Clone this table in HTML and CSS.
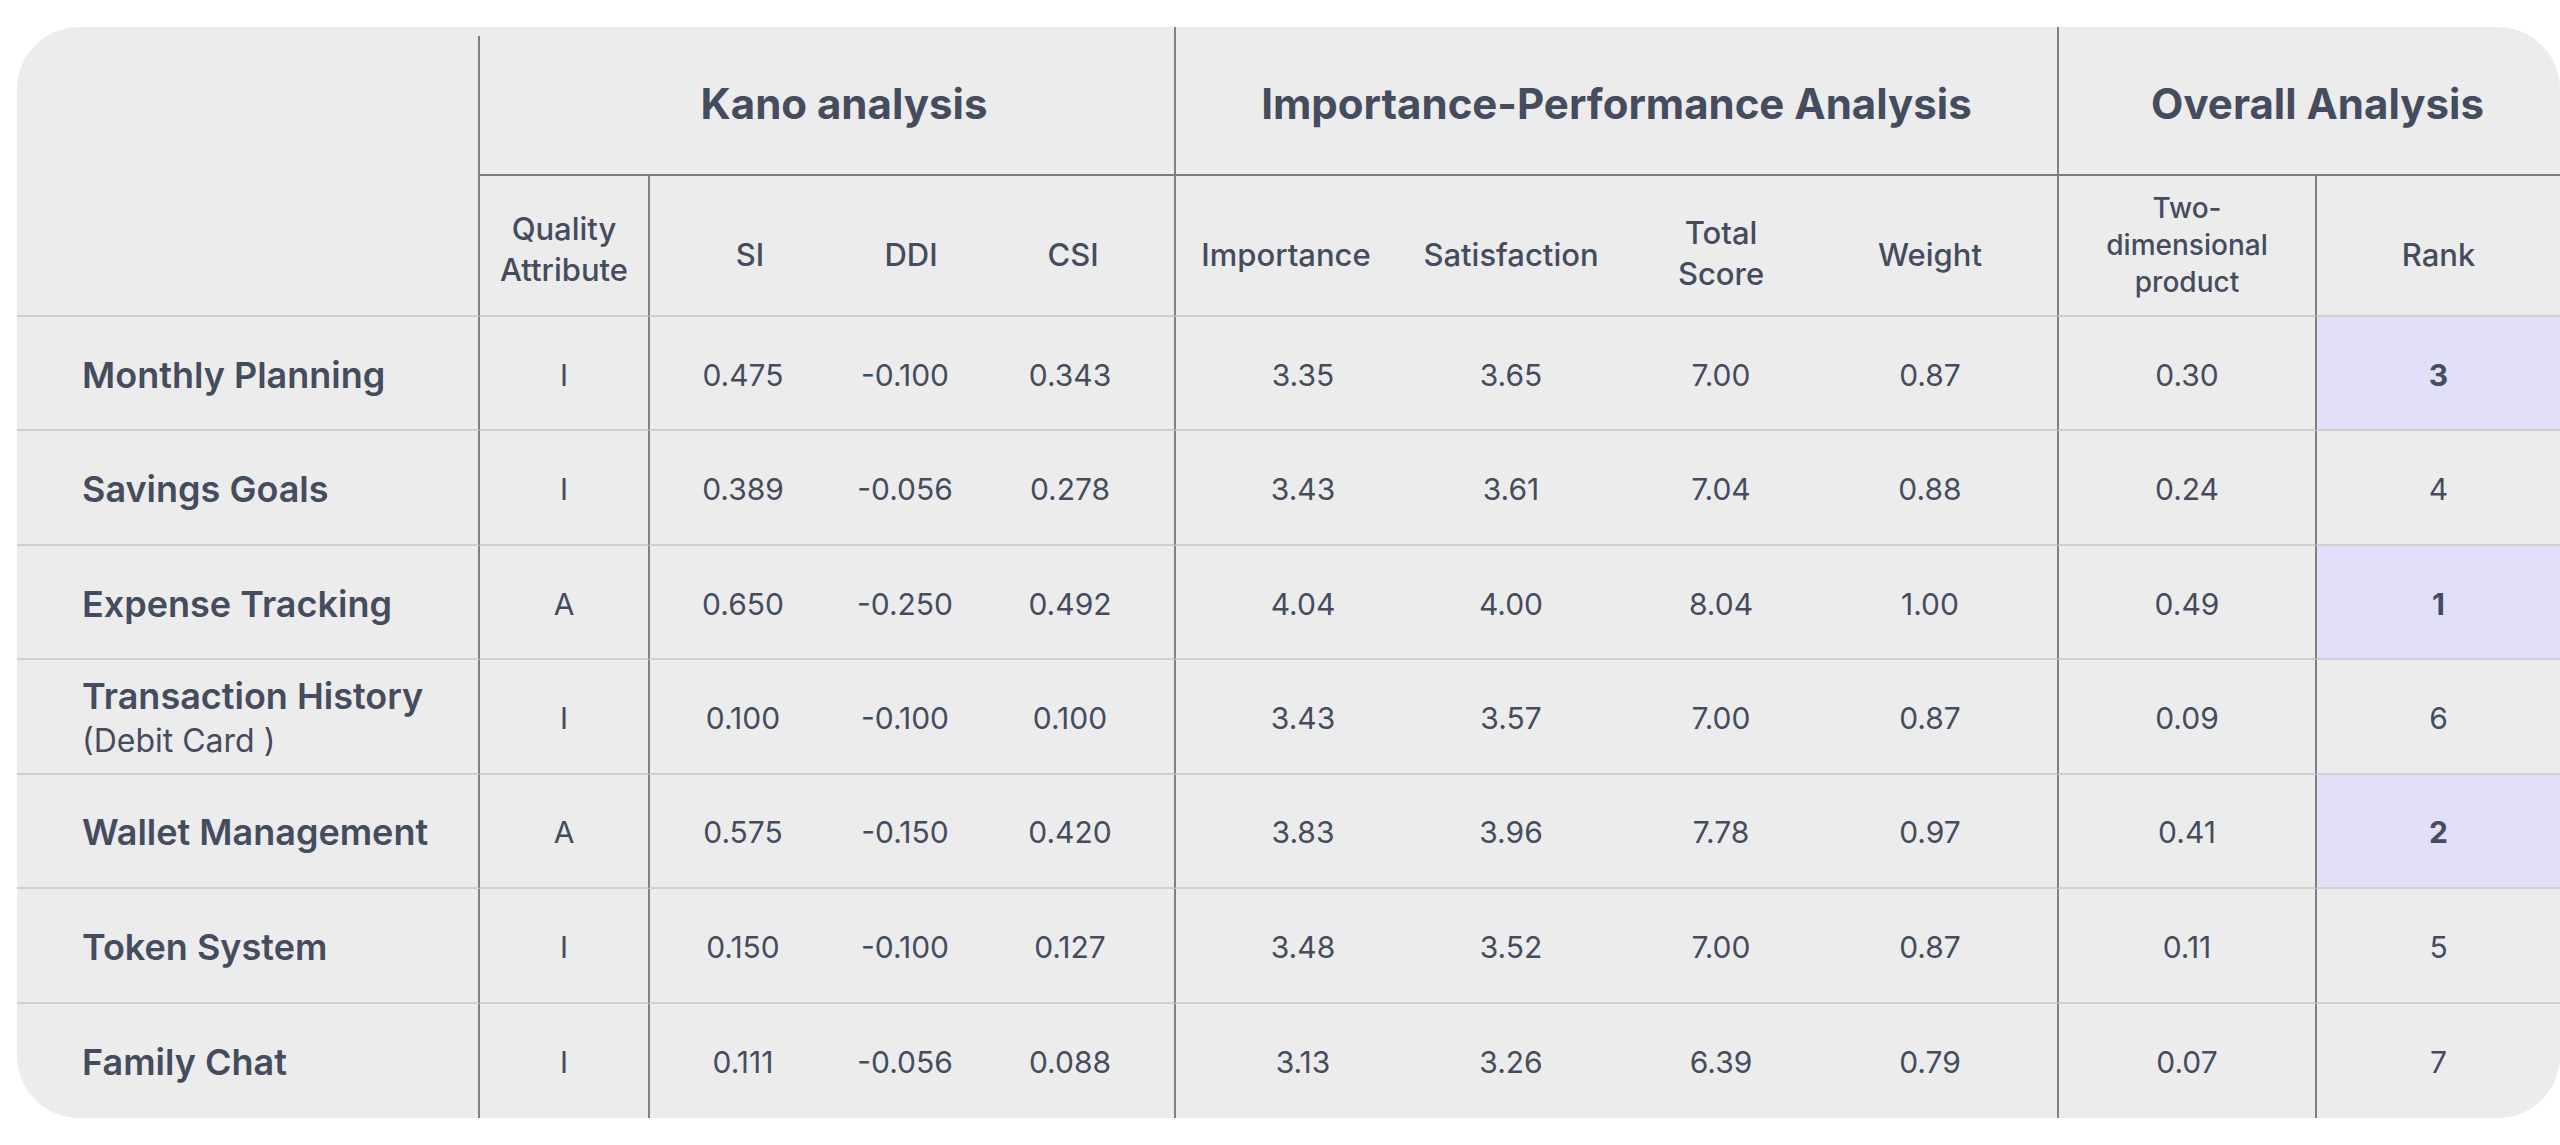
FILE: index.html
```html
<!DOCTYPE html>
<html lang="en">
<head>
<meta charset="utf-8">
<title>Kano &amp; IPA Analysis</title>
<link rel="stylesheet" href="styles.css">
</head>
<body>
<div class="card">
  <div class="table">
    <div class="corner"></div>
    <div class="group group-kano">Kano analysis</div>
    <div class="group group-ipa vl">Importance-Performance Analysis</div>
    <div class="group group-overall vl">Overall Analysis</div>

    <div class="sub sub-qa">Quality<br>Attribute</div>
    <div class="sub single vl kano-first">SI</div>
    <div class="sub single">DDI</div>
    <div class="sub single kano-last">CSI</div>
    <div class="sub single vl ipa-first ipa-label">Importance</div>
    <div class="sub single">Satisfaction</div>
    <div class="sub sub-total">Total<br>Score</div>
    <div class="sub single ipa-last">Weight</div>
    <div class="sub sub-two vl">Two-<br>dimensional<br>product</div>
    <div class="sub single vl">Rank</div>

    <div class="c name">Monthly Planning</div>
    <div class="c">I</div>
    <div class="c vl kano-first">0.475</div>
    <div class="c ddi">-0.100</div>
    <div class="c kano-last">0.343</div>
    <div class="c vl ipa-first">3.35</div>
    <div class="c">3.65</div>
    <div class="c">7.00</div>
    <div class="c ipa-last">0.87</div>
    <div class="c vl">0.30</div>
    <div class="c vl rank hl">3</div>

    <div class="c name">Savings Goals</div>
    <div class="c">I</div>
    <div class="c vl kano-first">0.389</div>
    <div class="c ddi">-0.056</div>
    <div class="c kano-last">0.278</div>
    <div class="c vl ipa-first">3.43</div>
    <div class="c">3.61</div>
    <div class="c">7.04</div>
    <div class="c ipa-last">0.88</div>
    <div class="c vl">0.24</div>
    <div class="c vl rank">4</div>

    <div class="c name">Expense Tracking</div>
    <div class="c">A</div>
    <div class="c vl kano-first">0.650</div>
    <div class="c ddi">-0.250</div>
    <div class="c kano-last">0.492</div>
    <div class="c vl ipa-first">4.04</div>
    <div class="c">4.00</div>
    <div class="c">8.04</div>
    <div class="c ipa-last">1.00</div>
    <div class="c vl">0.49</div>
    <div class="c vl rank hl">1</div>

    <div class="c name"><span>Transaction History</span><span class="note">(Debit Card )</span></div>
    <div class="c">I</div>
    <div class="c vl kano-first">0.100</div>
    <div class="c ddi">-0.100</div>
    <div class="c kano-last">0.100</div>
    <div class="c vl ipa-first">3.43</div>
    <div class="c">3.57</div>
    <div class="c">7.00</div>
    <div class="c ipa-last">0.87</div>
    <div class="c vl">0.09</div>
    <div class="c vl rank">6</div>

    <div class="c name">Wallet Management</div>
    <div class="c">A</div>
    <div class="c vl kano-first">0.575</div>
    <div class="c ddi">-0.150</div>
    <div class="c kano-last">0.420</div>
    <div class="c vl ipa-first">3.83</div>
    <div class="c">3.96</div>
    <div class="c">7.78</div>
    <div class="c ipa-last">0.97</div>
    <div class="c vl">0.41</div>
    <div class="c vl rank hl">2</div>

    <div class="c name">Token System</div>
    <div class="c">I</div>
    <div class="c vl kano-first">0.150</div>
    <div class="c ddi">-0.100</div>
    <div class="c kano-last">0.127</div>
    <div class="c vl ipa-first">3.48</div>
    <div class="c">3.52</div>
    <div class="c">7.00</div>
    <div class="c ipa-last">0.87</div>
    <div class="c vl">0.11</div>
    <div class="c vl rank">5</div>

    <div class="c name last">Family Chat</div>
    <div class="c last">I</div>
    <div class="c last vl kano-first">0.111</div>
    <div class="c last ddi">-0.056</div>
    <div class="c last kano-last">0.088</div>
    <div class="c last vl ipa-first">3.13</div>
    <div class="c last">3.26</div>
    <div class="c last">6.39</div>
    <div class="c last ipa-last">0.79</div>
    <div class="c last vl">0.07</div>
    <div class="c last vl rank">7</div>
  </div>
</div>
</body>
</html>
```

FILE: styles.css
```css
* {
  box-sizing: border-box;
}

html, body {
  margin: 0;
  padding: 0;
  background: #ffffff;
}

body {
  font-family: Inter, "Noto Sans", "Liberation Sans", sans-serif;
  color: #454c5e;
  padding: 27px 0 0 17px;
}

.card {
  width: 2543px;
  height: 1091px;
  background: #ececec;
  border-radius: 62px;
  overflow: hidden;
}

.table {
  display: grid;
  height: 100%;
  grid-template-columns: 463px 168px 182px 162px 182px 232px 210px 210px 231px 258px 245px;
  grid-template-rows: 149px 141px repeat(7, 1fr);
}

/* vertical rules */
.vl {
  border-left: 2px solid #808080;
}

/* header row 1 */
.corner {
  grid-column: 1;
  grid-row: 1 / span 2;
  margin-top: 9px;
  border-right: 2px solid #808080;
  border-bottom: 2px solid #cfcfcf;
}

.group {
  display: flex;
  align-items: center;
  justify-content: center;
  font-size: 42px;
  font-weight: 650;
  padding-top: 6px;
  border-bottom: 2px solid #7d7d7d;
  white-space: nowrap;
}

.group-kano {
  grid-column: 2 / span 4;
  padding-left: 34px;
}

.group-ipa {
  grid-column: 6 / span 4;
}

.group-overall {
  grid-column: 10 / span 2;
  padding-left: 16px;
}

/* header row 2 */
.sub {
  display: flex;
  align-items: center;
  justify-content: center;
  text-align: center;
  font-size: 31px;
  font-weight: 500;
  line-height: 41px;
  border-bottom: 2px solid #cfcfcf;
  white-space: nowrap;
}

.sub.single {
  padding-top: 18px;
}

.sub-qa {
  padding-top: 6px;
}

.sub-total {
  padding-top: 14px;
}

.sub-two {
  font-size: 28px;
  line-height: 37px;
}

/* column padding inside groups */
.kano-first {
  padding-left: 20px;
}

.kano-last {
  padding-right: 20px;
}

.c.kano-first {
  padding-right: 14px;
}

.c.ddi {
  padding-right: 12px;
}

.c.kano-last {
  padding-right: 26px;
}

.ipa-first {
  padding-left: 24px;
}

.ipa-last {
  padding-right: 23px;
}

.sub.ipa-label {
  padding-left: 24px;
  padding-right: 34px;
}

/* data cells */
.c {
  display: flex;
  align-items: center;
  justify-content: center;
  font-size: 30px;
  font-weight: 400;
  padding-top: 3px;
  border-bottom: 2px solid #cfcfcf;
  white-space: nowrap;
}

.c.last {
  border-bottom: none;
}

.c.name {
  flex-direction: column;
  align-items: flex-start;
  justify-content: center;
  padding-left: 65px;
  padding-top: 3px;
  font-size: 36px;
  font-weight: 620;
  border-right: 2px solid #808080;
}

.name .note {
  font-size: 32px;
  font-weight: 400;
  line-height: 44px;
}

.name span:first-child {
  line-height: 46px;
}

.c.hl {
  background: #e1dffa;
  background-clip: padding-box;
  font-weight: 700;
}
```
